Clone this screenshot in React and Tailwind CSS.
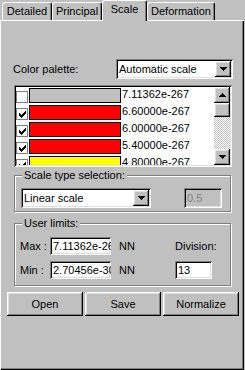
import React from "react";

const RAISED =
  "shadow-[inset_-1px_-1px_#000,inset_1px_1px_#fff,inset_-2px_-2px_#808080,inset_2px_2px_#dfdfdf]";
const SUNKEN =
  "shadow-[inset_1px_1px_#808080,inset_-1px_-1px_#fff,inset_2px_2px_#000,inset_-2px_-2px_#dfdfdf]";

function Check() {
  const px = [
    [6, 0], [5, 1], [6, 1], [0, 2], [4, 2], [5, 2], [6, 2], [0, 3], [1, 3], [3, 3], [4, 3], [5, 3],
    [0, 4], [1, 4], [2, 4], [3, 4], [4, 4], [1, 5], [2, 5], [3, 5], [2, 6],
  ];
  return (
    <svg width="7" height="7" viewBox="0 0 7 7" shapeRendering="crispEdges">
      {px.map(([x, y], i) => (
        <rect key={i} x={x} y={y} width="1" height="1" fill="#000" />
      ))}
    </svg>
  );
}

function Arrow({ up }) {
  return (
    <svg width="7" height="4" viewBox="0 0 7 4" shapeRendering="crispEdges">
      {up ? (
        <path d="M3 0h1v1h1v1h1v1h1v1H0V3h1V2h1V1h1z" fill="#000" />
      ) : (
        <path d="M0 0h7v1h-1v1h-1v1h-1v1h-1v-1h-1v-1h-1v-1h-1z" fill="#000" />
      )}
    </svg>
  );
}

function DropBtn() {
  return (
    <div className={`w-[16px] h-full bg-[#c0c0c0] flex items-center justify-center ${RAISED}`}>
      <Arrow />
    </div>
  );
}

function Combo({ text, className }) {
  return (
    <div className={`flex h-[20px] bg-white p-[2px] ${SUNKEN} ${className}`}>
      <div className="flex-1 pl-[1px] leading-[16px] whitespace-nowrap overflow-hidden">{text}</div>
      <DropBtn />
    </div>
  );
}

function Edit({ text, className, disabled }) {
  return (
    <div
      className={`h-[18px] p-[2px] pl-[3px] leading-[14px] whitespace-nowrap overflow-hidden ${SUNKEN} ${
        disabled ? "bg-[#c0c0c0] text-[#808080]" : "bg-white"
      } ${className}`}
    >
      {text}
    </div>
  );
}

function Group({ label, className, children }) {
  return (
    <div
      className={`relative ml-[14px] w-[217px] border border-[#808080] shadow-[inset_1px_1px_#fff,1px_1px_#fff] ${className}`}
    >
      <div className="absolute left-[7px] -top-[8px] px-[2px] bg-[#c0c0c0] leading-[14px]">{label}</div>
      {children}
    </div>
  );
}

function Tab({ children, className, selected }) {
  return (
    <div
      className={`flex justify-center border-t border-l border-white border-r border-r-black rounded-t-[3px] shadow-[inset_-1px_0_#808080] bg-[#c0c0c0] ${
        selected ? "h-[21px] -mb-[1px] pt-[2px]" : "h-[18px] pt-[2px]"
      } ${className}`}
    >
      <span className="leading-[13px]">{children}</span>
    </div>
  );
}

const ROWS = [
  { checked: false, color: "bg-[#c0c0c0]", v: "7.11362e-267" },
  { checked: true, color: "bg-[#ff0000]", v: "6.60000e-267" },
  { checked: true, color: "bg-[#ff0000]", v: "6.00000e-267" },
  { checked: true, color: "bg-[#ff0000]", v: "5.40000e-267" },
  { checked: true, color: "bg-[#ffff00]", v: "4.80000e-267" },
];

function Button({ children }) {
  return (
    <div className={`w-[76px] h-[24px] flex items-center justify-center bg-[#c0c0c0] ${RAISED}`}>
      {children}
    </div>
  );
}

export default function App() {
  return (
    <div className="w-[245px] h-[370px] bg-[#c0c0c0] text-[11px] text-black overflow-hidden font-['Liberation_Sans',Arial,sans-serif]">
      <div className="relative z-10 flex items-end h-[20px] pl-[2px]">
        <Tab className="w-[50px]">Detailed</Tab>
        <Tab className="w-[50px]">Principal</Tab>
        <Tab className="w-[45px]" selected>
          Scale
        </Tab>
        <Tab className="w-[68px]">Deformation</Tab>
      </div>
      <div className="w-[244px] h-[350px] flex flex-col shadow-[inset_1px_1px_#fff,inset_-1px_-1px_#000,inset_-2px_-2px_#808080]">
        <div className="flex items-center mt-[39px] h-[20px]">
          <span className="ml-[13px] w-[103px]">Color palette:</span>
          <Combo text="Automatic scale" className="w-[117px]" />
        </div>

        <div className={`ml-[14px] mt-[6px] w-[218px] h-[82px] bg-white p-[2px] flex ${SUNKEN}`}>
          <div className="flex-1 flex flex-col overflow-hidden pt-[1px]">
            {ROWS.map((r, i) => (
              <div key={i} className="flex items-start h-[17px] shrink-0">
                <div className="w-[12px] h-[12px] mt-[3px] border border-[#808080] bg-white flex items-center justify-center">
                  {r.checked && <Check />}
                </div>
                <div className={`ml-[1px] w-[92px] h-[15px] border border-black ${r.color}`} />
                <span className="ml-[1px] leading-[12px]">{r.v}</span>
              </div>
            ))}
          </div>
          <div className="w-[16px] h-full flex flex-col">
            <div className={`h-[16px] bg-[#c0c0c0] flex items-center justify-center ${RAISED}`}>
              <Arrow up />
            </div>
            <div className={`h-[14px] bg-[#c0c0c0] ${RAISED}`} />
            <div className="flex-1 bg-[repeating-conic-gradient(#c0c0c0_0%_25%,#fff_0%_50%)] bg-[length:2px_2px]" />
            <div className={`h-[16px] bg-[#c0c0c0] flex items-center justify-center ${RAISED}`}>
              <Arrow />
            </div>
          </div>
        </div>

        <Group label="Scale type selection:" className="mt-[8px] h-[37px]">
          <div className="flex items-center mt-[12px] ml-[6px]">
            <Combo text="Linear scale" className="w-[130px]" />
            <Edit text="0.5" disabled className="ml-[33px] w-[38px] h-[20px] leading-[16px]" />
          </div>
        </Group>

        <Group label="User limits:" className="mt-[11px] h-[63px]">
          <div className="flex items-center mt-[13px] h-[18px]">
            <span className="ml-[5px] w-[30px]">Max :</span>
            <Edit text="7.11362e-267" className="w-[61px]" />
            <span className="ml-[8px] w-[56px]">NN</span>
            <span>Division:</span>
          </div>
          <div className="flex items-center mt-[6px] h-[18px]">
            <span className="ml-[5px] w-[30px]">Min :</span>
            <Edit text="2.70456e-307" className="w-[61px]" />
            <span className="ml-[8px] w-[56px]">NN</span>
            <Edit text="13" className="w-[37px]" />
          </div>
        </Group>

        <div className="flex gap-[2px] ml-[7px] mt-[6px]">
          <Button>Open</Button>
          <Button>Save</Button>
          <Button>Normalize</Button>
        </div>
      </div>
    </div>
  );
}
